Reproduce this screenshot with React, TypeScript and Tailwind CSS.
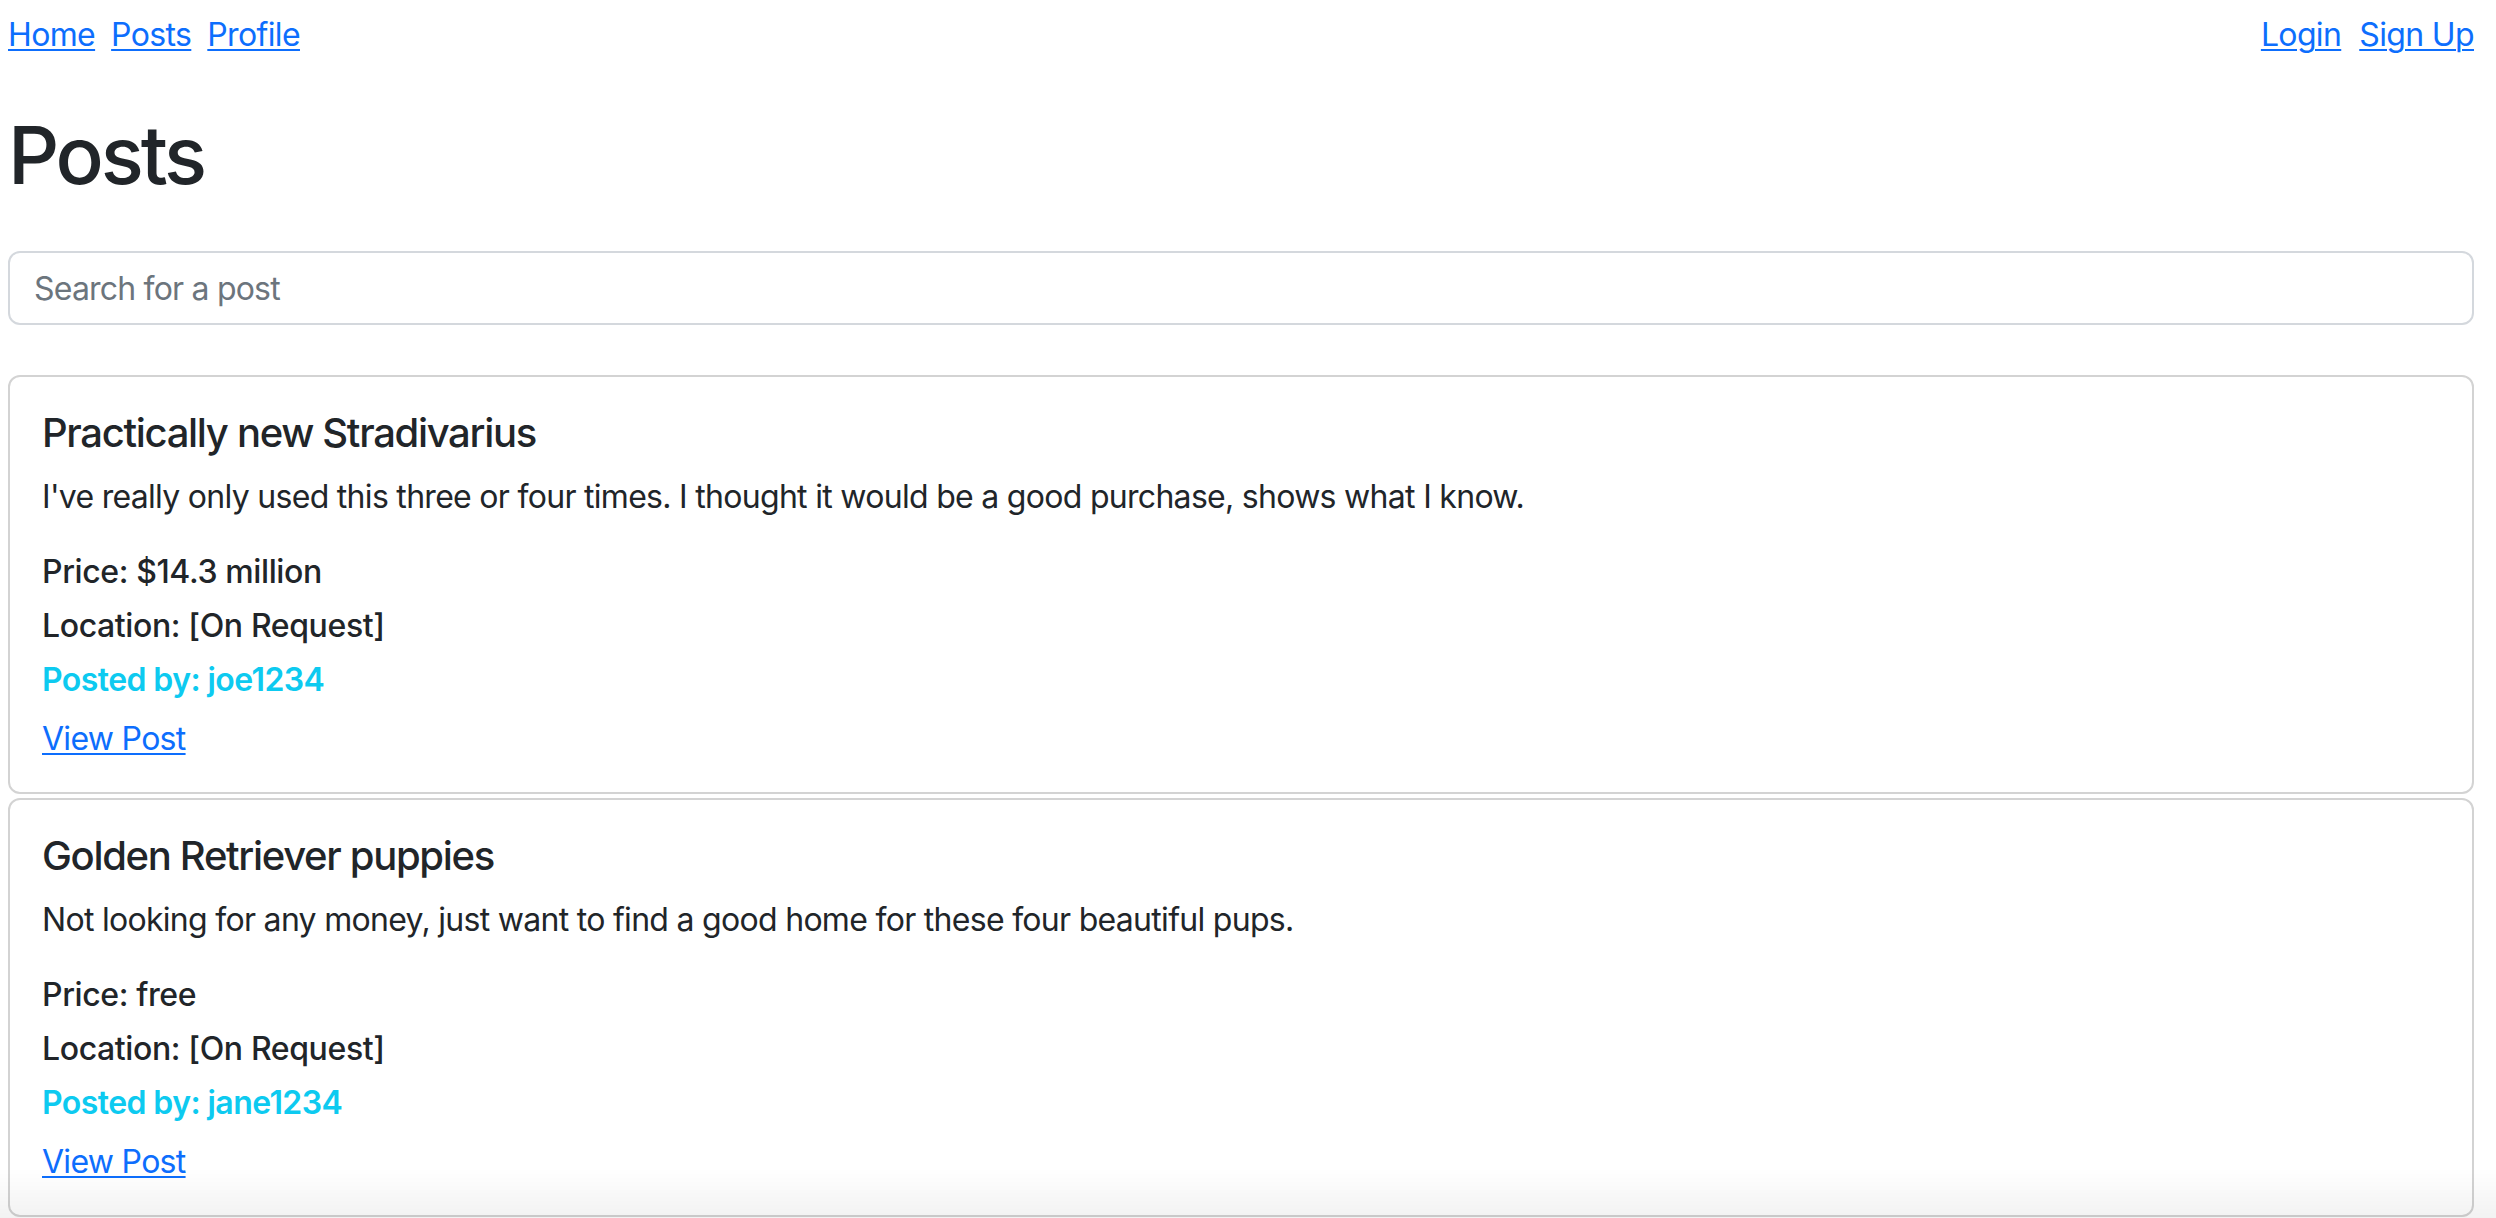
const posts = [
  {
    title: "Practically new Stradivarius",
    body: "I've really only used this three or four times. I thought it would be a good purchase, shows what I know.",
    price: "$14.3 million",
    location: "[On Request]",
    author: "joe1234",
  },
  {
    title: "Golden Retriever puppies",
    body: "Not looking for any money, just want to find a good home for these four beautiful pups.",
    price: "free",
    location: "[On Request]",
    author: "jane1234",
  },
];

const linkCls =
  "text-[#0d6efd] underline decoration-2 underline-offset-[3px]";

const App: React.FC = () => {
  return (
    <div className="min-h-screen bg-white pl-2 pr-[22px] font-['Inter',sans-serif] text-[#212529]">
      <nav className="flex justify-between pt-[11px] text-[32px] leading-[48px] tracking-[-0.02em]">
        <div className="flex gap-4">
          <a href="#" className={linkCls}>Home</a>
          <a href="#" className={linkCls}>Posts</a>
          <a href="#" className={linkCls}>Profile</a>
        </div>
        <div className="flex gap-[18px]">
          <a href="#" className={linkCls}>Login</a>
          <a href="#" className={linkCls}>Sign Up</a>
        </div>
      </nav>

      <h1 className="mt-12 mb-12 text-[80px] font-medium leading-[96px] tracking-[-0.04em]">Posts</h1>

      <input
        type="text"
        placeholder="Search for a post"
        className="block h-[74px] w-full rounded-xl border-2 border-[#d4d8dd] px-[24px] text-[32px] tracking-[-0.025em] text-[#212529] placeholder:text-[#6c757d] outline-none"
      />

      <div className="mt-[50px] flex flex-col gap-1">
        {posts.map((p) => (
          <div
            key={p.title}
            className="rounded-xl border-2 border-[#d3d3d3] bg-white px-8 pt-8 pb-[29px]"
          >
            <h5 className="mb-4 text-[40px] font-medium leading-[48px] tracking-[-0.033em]">{p.title}</h5>
            <p className="mb-8 text-[32px] leading-[48px] tracking-[-0.022em]">{p.body}</p>
            <h6 className="mb-4 text-[32px] font-medium leading-[38px] tracking-[-0.012em]">Price: {p.price}</h6>
            <h6 className="mb-4 text-[32px] font-medium leading-[38px] tracking-[-0.012em]">Location: {p.location}</h6>
            <h6 className="mb-4 text-[32px] font-semibold leading-[38px] tracking-[-0.018em] text-[#0dcaf0]">
              Posted by: {p.author}
            </h6>
            <a href="#" className={`text-[32px] leading-[48px] tracking-[-0.022em] ${linkCls}`}>
              View Post
            </a>
          </div>
        ))}
      </div>

      <div className="pointer-events-none fixed inset-x-0 bottom-0 h-[50px] bg-gradient-to-b from-transparent to-black/5" />
    </div>
  );
};

export default App;
